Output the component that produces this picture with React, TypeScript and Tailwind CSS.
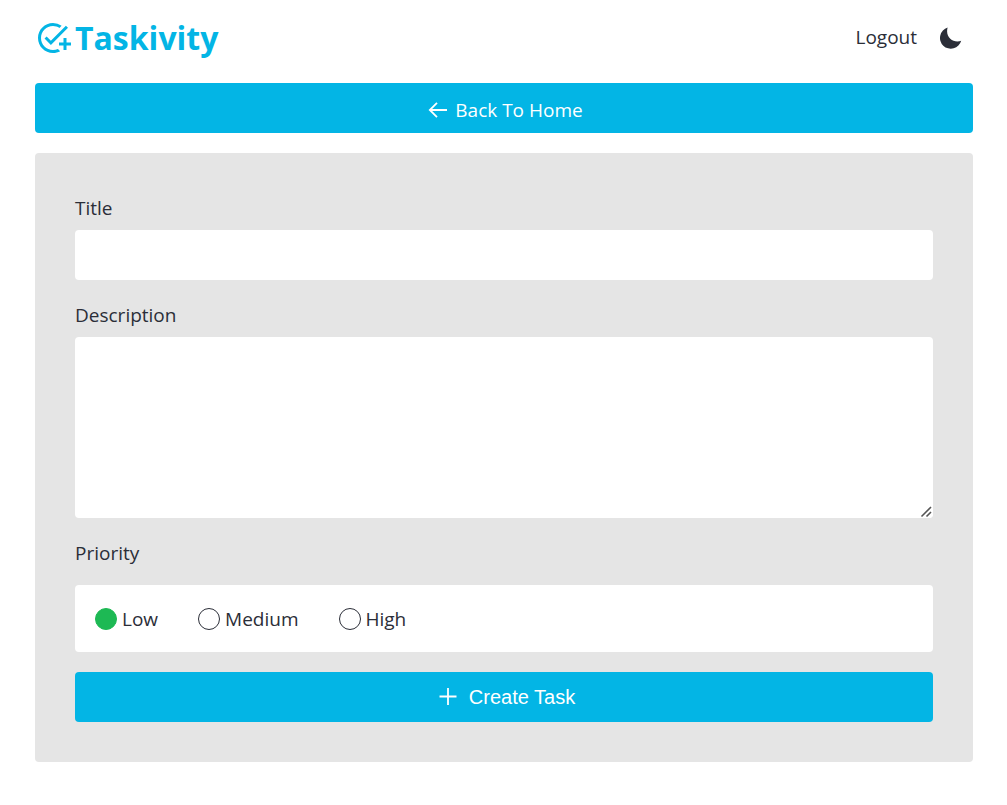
import { useState } from "react";
import { MdOutlineAddTask } from "react-icons/md";

const priorities = [
  { name: "Low", color: "checked:border-[#1db954] checked:bg-[#1db954]" },
  { name: "Medium", color: "checked:border-[#f5b400] checked:bg-[#f5b400]" },
  { name: "High", color: "checked:border-[#e53935] checked:bg-[#e53935]" },
];

function MoonIcon() {
  return (
    <svg viewBox="0 0 24 24" className="size-6" fill="currentColor" aria-hidden="true">
      <path d="M8.6 1.6A10.8 10.8 0 1 0 22.2 14.8C15.2 17.5 5.8 12.2 8.6 1.6Z" />
    </svg>
  );
}

function ArrowLeftIcon() {
  return (
    <svg viewBox="0 0 20 20" className="size-5" fill="none" stroke="currentColor" strokeWidth="1.8" aria-hidden="true">
      <path d="M20 10H3M10 2.8 2.8 10 10 17.2" />
    </svg>
  );
}

function PlusIcon() {
  return (
    <svg viewBox="0 0 18 18" className="size-[18px]" fill="none" stroke="currentColor" strokeWidth="1.8" aria-hidden="true">
      <path d="M9 0v17M.5 8.5h17" />
    </svg>
  );
}

function ResizeGrip() {
  return (
    <svg
      viewBox="0 0 14 14"
      className="pointer-events-none absolute right-0 bottom-0 size-3.5 rounded-br bg-white text-[#555]"
      fill="none"
      stroke="currentColor"
      strokeWidth="1.6"
      aria-hidden="true"
    >
      <path d="M2.5 12.5 12 3M7.5 12.5 12 8" />
    </svg>
  );
}

function Header() {
  return (
    <header className="flex h-[83px] items-center justify-between pb-2">
      <a href="#home" className="flex items-center gap-1 text-[#03b5e5]">
        <MdOutlineAddTask className="size-9" aria-hidden="true" />
        <span className="text-[32px] leading-10 font-bold">Taskivity</span>
      </a>
      <nav className="flex items-center gap-[22px] pr-2.5">
        <a href="#logout">Logout</a>
        <button type="button" aria-label="Toggle dark mode">
          <MoonIcon />
        </button>
      </nav>
    </header>
  );
}

export default function App() {
  const [priority, setPriority] = useState("Low");

  return (
    <div className="pr-[34px] pb-10 pl-[35px] font-['Open_Sans','Noto_Sans',sans-serif] text-[19px] leading-[29px] text-[#2b2e38]">
      <Header />
      <main>
        <a
          href="#home"
          className="flex h-[50px] items-center justify-center gap-2 rounded bg-[#03b5e5] pt-1 pl-0.5 text-white"
        >
          <ArrowLeftIcon />
          Back To Home
        </a>
        <form
          className="mt-5 rounded bg-[#e5e5e5] p-10"
          onSubmit={(event) => event.preventDefault()}
        >
          <label htmlFor="title" className="block pt-px pb-[7px]">
            Title
          </label>
          <input
            id="title"
            type="text"
            className="mb-5 block h-[50px] w-full rounded bg-white px-5 outline-none"
          />
          <label htmlFor="description" className="block pt-px pb-[7px]">
            Description
          </label>
          <div className="relative mb-5">
            <textarea
              id="description"
              className="block h-[181px] w-full resize-y rounded bg-white p-5 outline-none"
            />
            <ResizeGrip />
          </div>
          <fieldset>
            <legend className="pt-px pb-[17px]">Priority</legend>
            <div className="flex h-[67px] items-center gap-10 rounded bg-white px-5">
              {priorities.map(({ name, color }) => (
                <label key={name} className="flex items-center gap-[5px]">
                  <input
                    type="radio"
                    name="priority"
                    value={name}
                    checked={priority === name}
                    onChange={() => setPriority(name)}
                    className={`size-[22px] appearance-none rounded-full border border-[#2b2e38] ${color}`}
                  />
                  <span className="pt-0.5">{name}</span>
                </label>
              ))}
            </div>
          </fieldset>
          <button
            type="submit"
            className="mt-5 flex h-[50px] w-full items-center justify-center gap-3 rounded bg-[#03b5e5] pl-1.5 font-['Liberation_Sans',Arial,sans-serif] text-xl text-white"
          >
            <PlusIcon />
            Create Task
          </button>
        </form>
      </main>
    </div>
  );
}
